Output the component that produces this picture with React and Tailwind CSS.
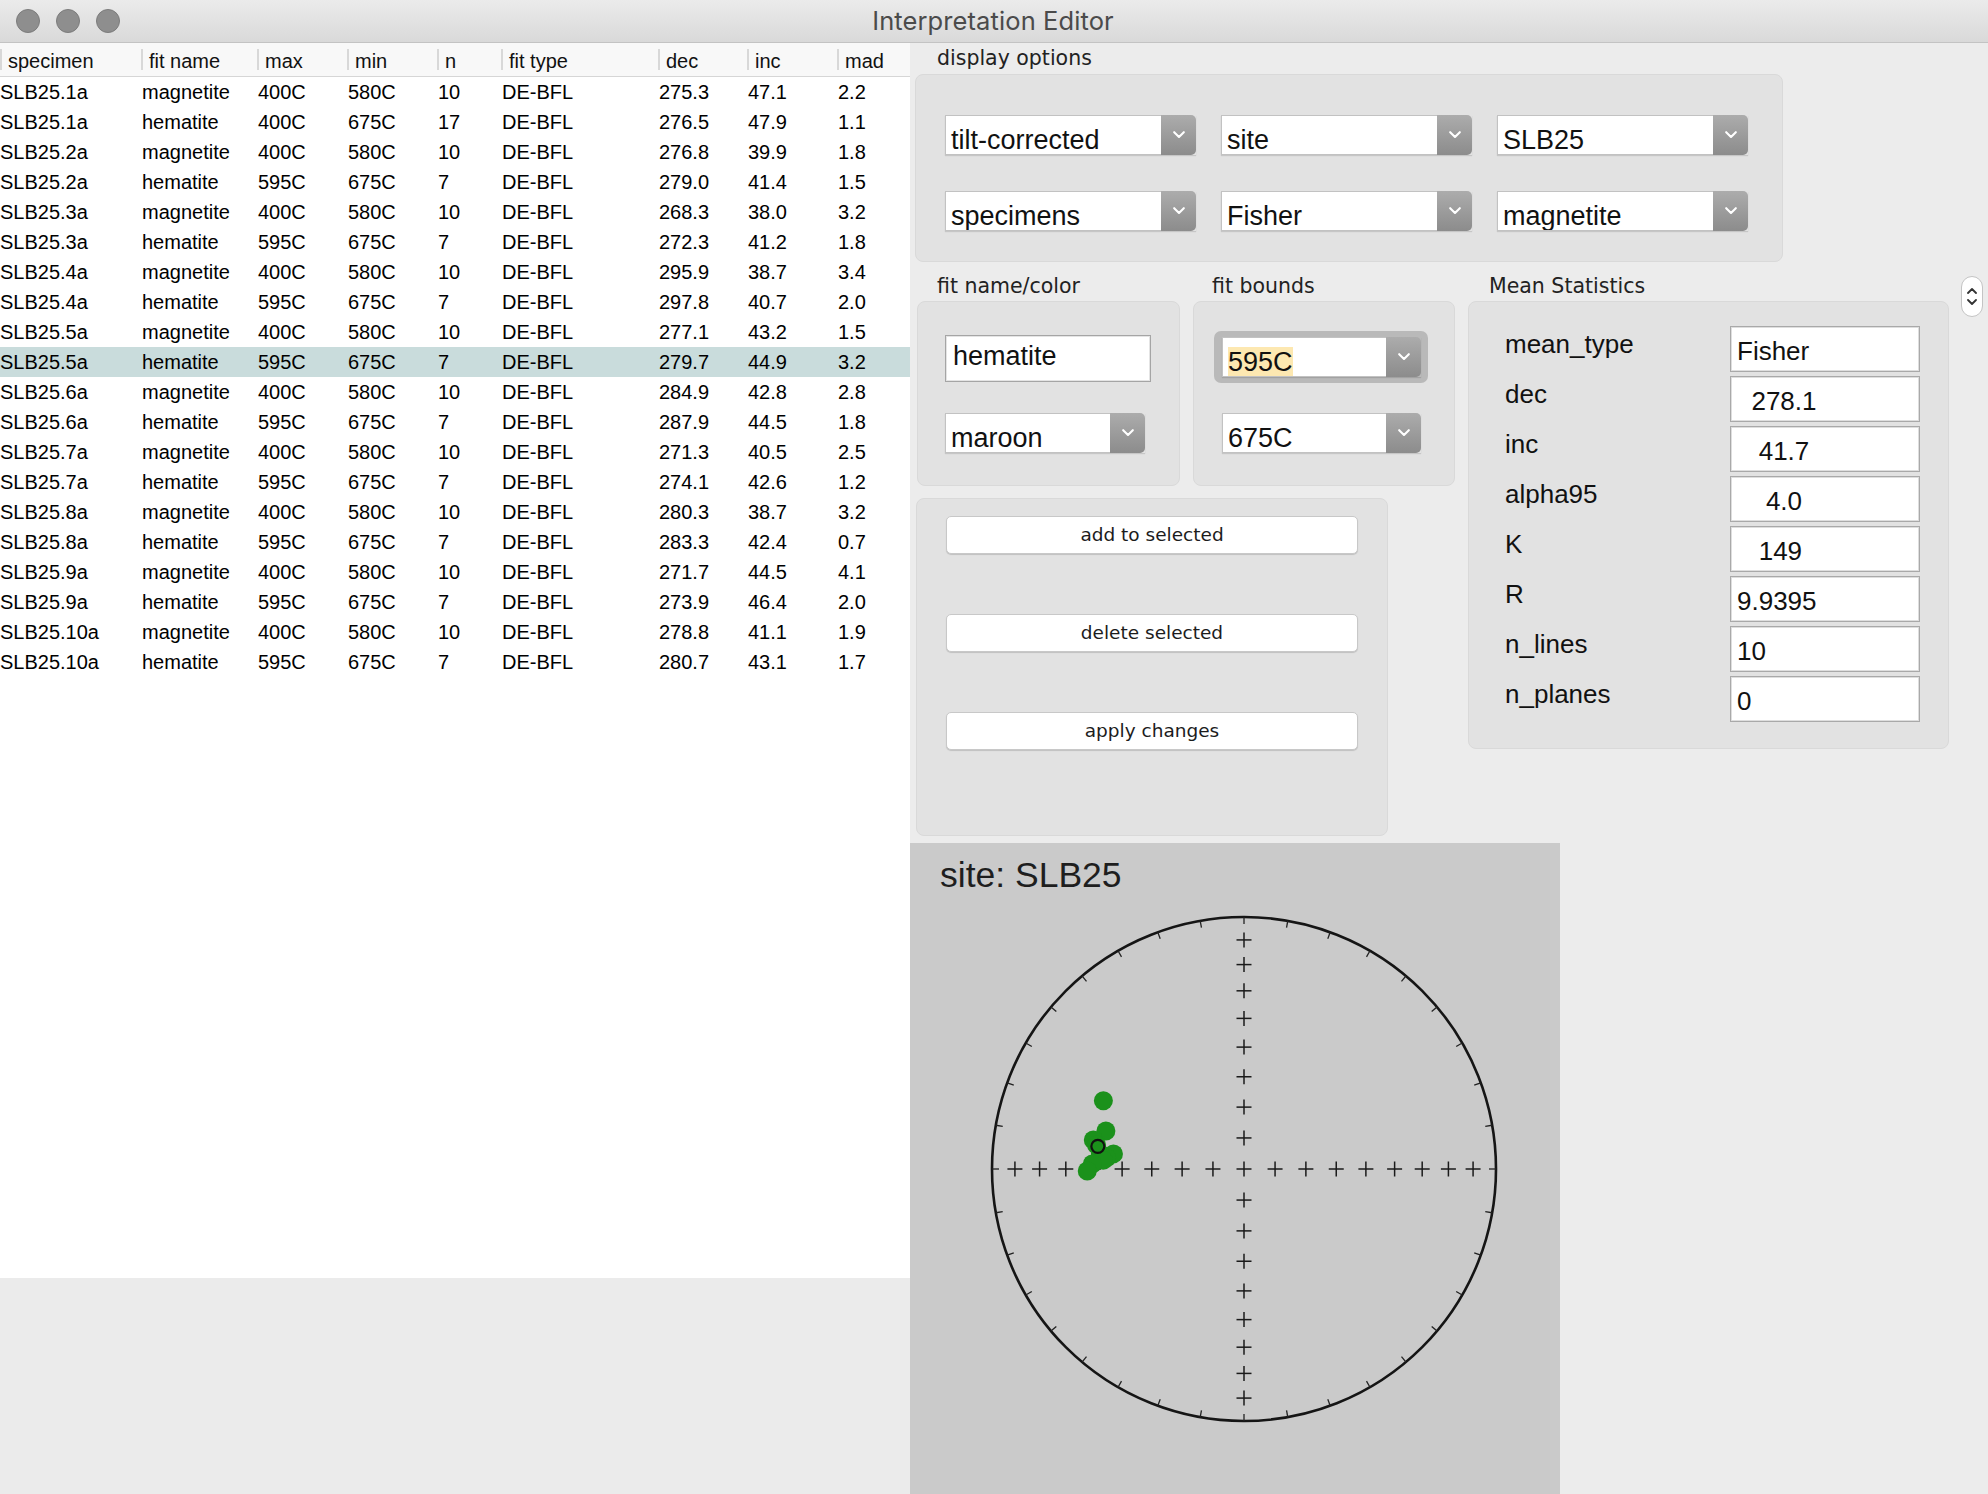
import React from "react";

const rows = [
  ["SLB25.1a", "magnetite", "400C", "580C", "10", "DE-BFL", "275.3", "47.1", "2.2"],
  ["SLB25.1a", "hematite", "400C", "675C", "17", "DE-BFL", "276.5", "47.9", "1.1"],
  ["SLB25.2a", "magnetite", "400C", "580C", "10", "DE-BFL", "276.8", "39.9", "1.8"],
  ["SLB25.2a", "hematite", "595C", "675C", "7", "DE-BFL", "279.0", "41.4", "1.5"],
  ["SLB25.3a", "magnetite", "400C", "580C", "10", "DE-BFL", "268.3", "38.0", "3.2"],
  ["SLB25.3a", "hematite", "595C", "675C", "7", "DE-BFL", "272.3", "41.2", "1.8"],
  ["SLB25.4a", "magnetite", "400C", "580C", "10", "DE-BFL", "295.9", "38.7", "3.4"],
  ["SLB25.4a", "hematite", "595C", "675C", "7", "DE-BFL", "297.8", "40.7", "2.0"],
  ["SLB25.5a", "magnetite", "400C", "580C", "10", "DE-BFL", "277.1", "43.2", "1.5"],
  ["SLB25.5a", "hematite", "595C", "675C", "7", "DE-BFL", "279.7", "44.9", "3.2"],
  ["SLB25.6a", "magnetite", "400C", "580C", "10", "DE-BFL", "284.9", "42.8", "2.8"],
  ["SLB25.6a", "hematite", "595C", "675C", "7", "DE-BFL", "287.9", "44.5", "1.8"],
  ["SLB25.7a", "magnetite", "400C", "580C", "10", "DE-BFL", "271.3", "40.5", "2.5"],
  ["SLB25.7a", "hematite", "595C", "675C", "7", "DE-BFL", "274.1", "42.6", "1.2"],
  ["SLB25.8a", "magnetite", "400C", "580C", "10", "DE-BFL", "280.3", "38.7", "3.2"],
  ["SLB25.8a", "hematite", "595C", "675C", "7", "DE-BFL", "283.3", "42.4", "0.7"],
  ["SLB25.9a", "magnetite", "400C", "580C", "10", "DE-BFL", "271.7", "44.5", "4.1"],
  ["SLB25.9a", "hematite", "595C", "675C", "7", "DE-BFL", "273.9", "46.4", "2.0"],
  ["SLB25.10a", "magnetite", "400C", "580C", "10", "DE-BFL", "278.8", "41.1", "1.9"],
  ["SLB25.10a", "hematite", "595C", "675C", "7", "DE-BFL", "280.7", "43.1", "1.7"],
];

const cols = [
  { name: "specimen", w: "w-[141px]" },
  { name: "fit name", w: "w-[116px]" },
  { name: "max", w: "w-[90px]" },
  { name: "min", w: "w-[90px]" },
  { name: "n", w: "w-[64px]" },
  { name: "fit type", w: "w-[157px]" },
  { name: "dec", w: "w-[89px]" },
  { name: "inc", w: "w-[90px]" },
  { name: "mad", w: "w-[73px]" },
];

const stats = [
  ["mean_type", "Fisher"],
  ["dec", "  278.1"],
  ["inc", "   41.7"],
  ["alpha95", "    4.0"],
  ["K", "   149"],
  ["R", "9.9395"],
  ["n_lines", "10"],
  ["n_planes", "0"],
];

function Chevron() {
  return (
    <svg width="12" height="8" viewBox="0 0 12 8">
      <path d="M1.2 1.2 L6 6 L10.8 1.2" fill="none" stroke="#ffffff" strokeWidth="2.1" strokeLinecap="round" strokeLinejoin="round" />
    </svg>
  );
}

function Select({ text, w, highlight }) {
  return (
    <div className={`flex h-[40px] ${w} shadow-[0_1px_1px_rgba(0,0,0,0.12)]`}>
      <div className="flex-1 bg-white border border-[#c2c2c2] border-r-0 overflow-hidden pl-[5px] pt-[11px] text-[27px] leading-[27px] text-[#111] whitespace-nowrap">
        {highlight ? <span className="bg-[#fde8b1]">{text}</span> : text}
      </div>
      <div className="w-[35px] rounded-r-[5px] bg-gradient-to-b from-[#acacac] to-[#8c8c8c] flex items-center justify-center">
        <Chevron />
      </div>
    </div>
  );
}

function Stereonet() {
  const cx = 334;
  const cy = 274;
  const r = 252;
  const ticks = [];
  for (let a = 0; a < 360; a += 10) {
    const t = (a * Math.PI) / 180;
    ticks.push(
      <line
        key={"t" + a}
        x1={cx + r * Math.sin(t)}
        y1={cy - r * Math.cos(t)}
        x2={cx + (r - 7) * Math.sin(t)}
        y2={cy - (r - 7) * Math.cos(t)}
        stroke="#222"
        strokeWidth="1.3"
      />
    );
  }
  const ds = [0];
  for (let inc = 10; inc <= 80; inc += 10) {
    ds.push(r * Math.SQRT2 * Math.sin((((90 - inc) / 2) * Math.PI) / 180));
  }
  const pts = [];
  ds.forEach((d, i) => {
    const list = d === 0 ? [[cx, cy]] : [[cx - d, cy], [cx + d, cy], [cx, cy - d], [cx, cy + d]];
    list.forEach(([x, y], j) => pts.push([x, y, i + "-" + j]));
  });
  const dots = [
    [-0.558, -0.271],
    [-0.548, -0.151],
    [-0.598, -0.115],
    [-0.585, -0.095],
    [-0.518, -0.06],
    [-0.545, -0.045],
    [-0.57, -0.06],
    [-0.559, -0.035],
    [-0.602, -0.02],
    [-0.622, 0.008],
  ];
  return (
    <svg width="650" height="599" viewBox="0 0 650 599">
      <circle cx={cx} cy={cy} r={r} fill="none" stroke="#151515" strokeWidth="2.6" />
      {ticks}
      {pts.map(([x, y, k]) => (
        <g key={k} stroke="#1a1a1a" strokeWidth="1.5">
          <line x1={x - 7.5} y1={y} x2={x + 7.5} y2={y} />
          <line x1={x} y1={y - 7.5} x2={x} y2={y + 7.5} />
        </g>
      ))}
      {dots.map(([dx, dy], i) => (
        <circle key={i} cx={cx + dx * r} cy={cy + dy * r} r="9.5" fill="#1b911b" />
      ))}
      <circle cx={cx - 0.58 * r} cy={cy - 0.09 * r} r="6.5" fill="none" stroke="#111" strokeWidth="2.2" />
    </svg>
  );
}

export default function App() {
  return (
    <div className="w-[1988px] h-[1494px] bg-[#ececec] flex flex-col overflow-hidden font-['Liberation_Sans',Arial,sans-serif] text-black">
      {/* Title bar */}
      <div className="h-[43px] shrink-0 bg-gradient-to-b from-[#ebebeb] to-[#d9d9d9] border-b border-[#c3c3c3] flex items-center relative">
        <div className="flex items-center gap-[16px] pl-[16px]">
          <div className="w-[24px] h-[24px] rounded-full bg-[#8e8e8e] border border-[#7c7c7c]" />
          <div className="w-[24px] h-[24px] rounded-full bg-[#8e8e8e] border border-[#7c7c7c]" />
          <div className="w-[24px] h-[24px] rounded-full bg-[#8e8e8e] border border-[#7c7c7c]" />
        </div>
        <div className="flex-1 text-center pr-[122px] font-['Inter',sans-serif] text-[25.5px] text-[#4b4b4b] tracking-[0.1px]">
          Interpretation Editor
        </div>
      </div>

      <div className="flex flex-1 min-h-0">
        {/* Left table */}
        <div className="w-[910px] shrink-0 flex flex-col">
          <div className="h-[1235px] bg-white flex flex-col">
            <div className="h-[34px] flex bg-[#f8f8f8] border-b border-[#d6d6d6]">
              {cols.map((c) => (
                <div key={c.name} className={`${c.w} flex items-center`}>
                  <div className="w-[2px] h-[21px] bg-[#d8d8d8]" />
                  <span className="ml-[6px] pt-[3px] text-[20px] leading-[24px] text-[#111]">{c.name}</span>
                </div>
              ))}
            </div>
            {rows.map((r, i) => (
              <div key={i} className={`h-[30px] flex text-[20px] leading-[30px] ${i === 9 ? "bg-[#c9dcdc]" : ""}`}>
                {r.map((v, j) => (
                  <div key={j} className={`${cols[j].w} ${j === 0 ? "" : "pl-[1px]"} whitespace-nowrap`}>
                    {v}
                  </div>
                ))}
              </div>
            ))}
          </div>
          <div className="flex-1 bg-[#ebebeb]" />
        </div>

        {/* Right panel */}
        <div className="flex-1 flex flex-col">
          <div className="h-[31px] flex items-center pl-[27px] font-['DejaVu_Sans',sans-serif] text-[20.5px] text-[#222]">
            display options
          </div>
          <div className="ml-[5px] w-[868px] h-[188px] rounded-[8px] bg-[#e2e2e2] border border-[#d9d9d9] pt-[40px] pl-[29px] flex flex-col gap-[36px]">
            <div className="flex gap-[25px]">
              <Select text="tilt-corrected" w="w-[251px]" />
              <Select text="site" w="w-[251px]" />
              <Select text="SLB25" w="w-[251px]" />
            </div>
            <div className="flex gap-[25px]">
              <Select text="specimens" w="w-[251px]" />
              <Select text="Fisher" w="w-[251px]" />
              <Select text="magnetite" w="w-[251px]" />
            </div>
          </div>

          <div className="h-[574px] flex">
            <div className="pl-[7px] flex flex-col">
              <div className="flex gap-[13px]">
                <div className="w-[263px] flex flex-col">
                  <div className="h-[39px] flex items-end pb-[3px] pl-[20px] font-['DejaVu_Sans',sans-serif] text-[20.5px] leading-[24px] text-[#222]">
                    fit name/color
                  </div>
                  <div className="h-[185px] rounded-[8px] bg-[#e2e2e2] border border-[#d9d9d9] flex flex-col items-start">
                    <div className="ml-[27px] mt-[33px] w-[206px] h-[47px] bg-white border border-[#a5a5a5] shadow-[inset_0_0_0_1px_#e4e4e4] pl-[7px] pt-[7px] text-[27px] leading-[27px] text-[#111]">
                      hematite
                    </div>
                    <div className="ml-[27px] mt-[31px]">
                      <Select text="maroon" w="w-[200px]" />
                    </div>
                  </div>
                </div>
                <div className="w-[262px] flex flex-col">
                  <div className="h-[39px] flex items-end pb-[3px] pl-[19px] font-['DejaVu_Sans',sans-serif] text-[20.5px] leading-[24px] text-[#222]">
                    fit bounds
                  </div>
                  <div className="h-[185px] rounded-[8px] bg-[#e2e2e2] border border-[#d9d9d9] flex flex-col items-start">
                    <div className="ml-[20px] mt-[29px] rounded-[7px] bg-[#b9b9b9] pt-[6px] pb-[6px] pl-[8px] pr-[7px]">
                      <Select text="595C" w="w-[199px]" highlight />
                    </div>
                    <div className="ml-[28px] mt-[30px]">
                      <Select text="675C" w="w-[199px]" />
                    </div>
                  </div>
                </div>
              </div>
              <div className="mt-[12px] -ml-[1px] w-[472px] h-[338px] rounded-[8px] bg-[#e2e2e2] border border-[#d9d9d9] pt-[17px] pl-[29px] flex flex-col gap-[60px]">
                {["add to selected", "delete selected", "apply changes"].map((b) => (
                  <div
                    key={b}
                    className="w-[412px] h-[38px] rounded-[5px] bg-white border border-[#c8c8c8] shadow-[0_1px_1px_rgba(0,0,0,0.15)] flex items-center justify-center font-['DejaVu_Sans',sans-serif] text-[18.5px] text-[#1c1c1c]"
                  >
                    {b}
                  </div>
                ))}
              </div>
            </div>

            <div className="ml-[13px] w-[481px] flex flex-col">
              <div className="h-[39px] flex items-end pb-[3px] pl-[21px] font-['DejaVu_Sans',sans-serif] text-[20.5px] leading-[24px] text-[#222]">
                Mean Statistics
              </div>
              <div className="h-[448px] rounded-[8px] bg-[#e2e2e2] border border-[#d9d9d9] pt-[24px] flex flex-col gap-[4px]">
                {stats.map(([k, v]) => (
                  <div key={k} className="h-[46px] flex">
                    <div className="w-[225px] ml-[36px] pt-[5px] text-[26px] leading-[26px] text-[#111]">{k}</div>
                    <div className="w-[190px] h-[46px] bg-white border border-[#a9a9a9] shadow-[inset_0_0_0_1px_#dedede] pl-[6px] pt-[11px] text-[26px] leading-[26px] text-[#111] whitespace-pre">
                      {v}
                    </div>
                  </div>
                ))}
              </div>
            </div>

            <div className="ml-[12px] mt-[14px] w-[22px] h-[41px] rounded-full bg-white border border-[#c4c4c4] flex flex-col items-center justify-center gap-[5px]">
              <svg width="10" height="6" viewBox="0 0 10 6">
                <path d="M1 5 L5 1 L9 5" fill="none" stroke="#333" strokeWidth="1.8" strokeLinecap="round" strokeLinejoin="round" />
              </svg>
              <svg width="10" height="6" viewBox="0 0 10 6">
                <path d="M1 1 L5 5 L9 1" fill="none" stroke="#333" strokeWidth="1.8" strokeLinecap="round" strokeLinejoin="round" />
              </svg>
            </div>
          </div>

          <div className="mt-[7px] w-[650px] h-[651px] bg-[#cacaca] flex flex-col">
            <div className="h-[52px] pt-[12px] pl-[30px] text-[35.5px] leading-[40px] text-[#1e1e1e]">site: SLB25</div>
            <Stereonet />
          </div>
        </div>
      </div>
    </div>
  );
}
